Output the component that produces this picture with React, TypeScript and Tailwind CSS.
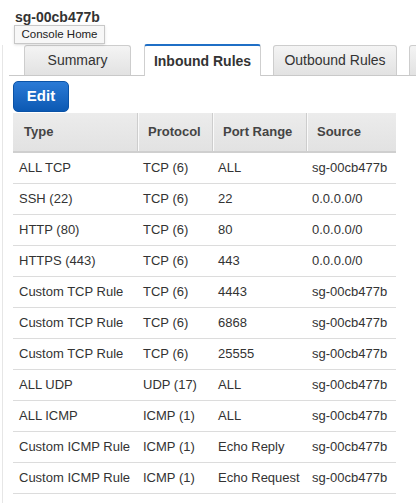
const rows = [
  ['ALL TCP', 'TCP (6)', 'ALL', 'sg-00cb477b'],
  ['SSH (22)', 'TCP (6)', '22', '0.0.0.0/0'],
  ['HTTP (80)', 'TCP (6)', '80', '0.0.0.0/0'],
  ['HTTPS (443)', 'TCP (6)', '443', '0.0.0.0/0'],
  ['Custom TCP Rule', 'TCP (6)', '4443', 'sg-00cb477b'],
  ['Custom TCP Rule', 'TCP (6)', '6868', 'sg-00cb477b'],
  ['Custom TCP Rule', 'TCP (6)', '25555', 'sg-00cb477b'],
  ['ALL UDP', 'UDP (17)', 'ALL', 'sg-00cb477b'],
  ['ALL ICMP', 'ICMP (1)', 'ALL', 'sg-00cb477b'],
  ['Custom ICMP Rule', 'ICMP (1)', 'Echo Reply', 'sg-00cb477b'],
  ['Custom ICMP Rule', 'ICMP (1)', 'Echo Request', 'sg-00cb477b'],
];

const cols = ['w-[124px]', 'w-[75px]', 'w-[94px]', 'w-[90px]'];
const headers = ['Type', 'Protocol', 'Port Range', 'Source'];

function Tab({ label, active, className }: { label: string; active?: boolean; className: string }) {
  if (active) {
    return (
      <div className={`${className} shrink-0 h-[32px] -mb-px bg-white border-x border-[#cfcfcf] border-t-2 border-t-[#1f6fc6] rounded-t-[3px] flex items-center justify-center text-[14px] font-bold text-[#333]`}>
        {label}
      </div>
    );
  }
  return (
    <div className={`${className} shrink-0 h-[30px] bg-gradient-to-b from-[#f4f4f4] to-[#e2e2e2] border border-b-0 border-[#cdcdcd] rounded-t-[3px] flex items-center justify-center text-[14px] text-[#333]`}>
      {label}
    </div>
  );
}

export default function App() {
  return (
    <div className="w-[416px] h-[503px] bg-white overflow-hidden relative" style={{ fontFamily: '"Liberation Sans", Arial, sans-serif' }}>
      <div className="pl-[15px] pt-[8px] h-[25px] text-[14px] font-bold text-[#333] leading-[18px]">sg-00cb477b</div>
      <div className="absolute left-[14px] top-[25px] w-[91px] h-[19px] bg-[#f7f7f7] border border-[#c8c8c8] shadow-sm flex items-center justify-center text-[11.5px] text-[#222] z-10">
        Console Home
      </div>
      <div className="ml-[2px] border-l border-[#e6e6e6] h-[478px]">
        <div className="ml-[6px] mt-[20px] border-b border-[#c9c9c9] flex items-end h-[31px] overflow-visible">
          <Tab label="Summary" className="ml-[15px] w-[107px]" />
          <Tab label="Inbound Rules" active className="ml-[13px] w-[117px]" />
          <Tab label="Outbound Rules" className="ml-[12px] w-[124px]" />
          <Tab label="" className="ml-[12px] w-[20px]" />
        </div>
        <div className="ml-[10px] mt-[5px] w-[56px] h-[31px] rounded-[5px] bg-gradient-to-b from-[#2a7ad6] to-[#0b59b3] border border-[#0a52a6] flex items-center justify-center text-white font-bold text-[15px]">
          Edit
        </div>
        <div className="ml-[10px] mt-[1px] w-[383px]">
          <div className="flex h-[40px] bg-gradient-to-b from-[#ececec] to-[#e2e2e2] border-b-2 border-[#cfcfcf]">
            {headers.map((h, i) => (
              <div key={h} className={`${cols[i]} flex items-center ${i === 0 ? 'pl-[11px]' : 'pl-[10px] border-l border-l-[#cdcdcd] shadow-[inset_1px_0_0_#fafafa]'} text-[13px] font-bold text-[#444]`}>
                {h}
              </div>
            ))}
          </div>
          {rows.map((r, ri) => (
            <div key={ri} className="flex h-[31px] border-b border-[#dcdcdc]">
              {r.map((c, i) => (
                <div key={i} className={`${cols[i]} flex items-center pl-[6px] text-[13px] text-[#333] whitespace-nowrap`}>
                  {c}
                </div>
              ))}
            </div>
          ))}
        </div>
      </div>
    </div>
  );
}
